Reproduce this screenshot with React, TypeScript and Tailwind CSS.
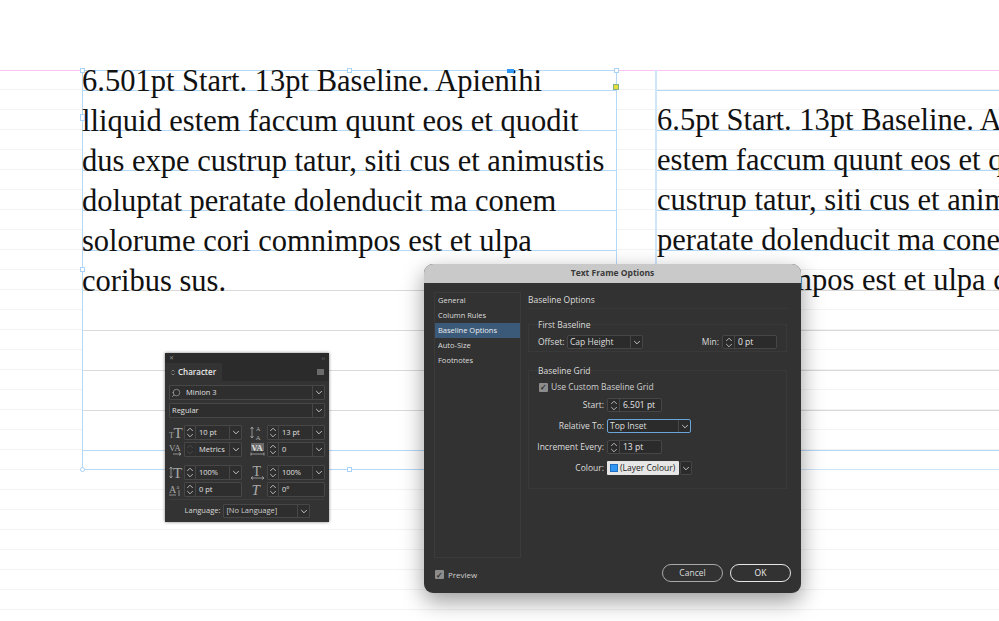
import type { ReactNode } from 'react';
import { Search } from 'lucide-react';

const leftLines = [
  '6.501pt Start. 13pt Baseline. Apienihi',
  'lliquid estem faccum quunt eos et quodit',
  'dus expe custrup tatur, siti cus et animustis',
  'doluptat peratate dolenducit ma conem',
  'solorume cori comnimpos est et ulpa',
  'coribus sus.',
];

const rightLines = [
  '6.5pt Start. 13pt Baseline. Apienihi lliquid',
  'estem faccum quunt eos et quodit dus',
  'custrup tatur, siti cus et animustis doluptat',
  'peratate dolenducit ma conem solorume',
  'cori comnimpos est et ulpa coribus sus.',
];

const pageRows = Array.from({ length: 28 });
const gridRows = Array.from({ length: 10 });

const Chev = ({ up = false, color = 'stroke-[#c4c4c4]' }: { up?: boolean; color?: string }) => (
  <svg width="8" height="5" viewBox="0 0 8 5" fill="none" className={color}>
    <path d={up ? 'M1.2 4 L4 1.2 L6.8 4' : 'M1.2 1 L4 3.8 L6.8 1'} strokeWidth="1" />
  </svg>
);

const Stepper = ({ disabled = false, width = 'w-[11px]' }: { disabled?: boolean; width?: string }) => (
  <span className={`flex h-full shrink-0 flex-col items-center justify-center gap-[1px] border-r border-[#474747] ${width} ${disabled ? 'opacity-20' : ''}`}>
    <Chev up color="stroke-[#b5b5b5]" />
    <Chev color="stroke-[#b5b5b5]" />
  </span>
);

const PanelField = ({ value, dropdown = true, disabled = false }: { value: string; dropdown?: boolean; disabled?: boolean }) => (
  <div className="flex h-[15px] w-[58px] items-center rounded-[1px] border border-[#474747] bg-[#2e2e2e]">
    <Stepper disabled={disabled} />
    <span className="flex-1 pl-[3px] text-[7.5px] text-[#e0e0e0]">{value}</span>
    {dropdown && (
      <span className="flex h-full w-[12px] items-center justify-center border-l border-[#474747]">
        <Chev />
      </span>
    )}
  </div>
);

const PanelSelect = ({ value, icon = false }: { value: string; icon?: boolean }) => (
  <div className="flex h-[15px] items-center rounded-[1px] border border-[#474747] bg-[#2e2e2e]">
    {icon && <Search className="ml-[1px] h-[10px] w-[10px] -scale-x-100 text-[#b5b5b5]" strokeWidth={1.5} />}
    <span className={`flex-1 text-[7.5px] text-[#e0e0e0] ${icon ? 'pl-[5px]' : 'pl-[2px]'}`}>{value}</span>
    <span className="flex h-full w-[12px] items-center justify-center border-l border-[#474747]">
      <Chev />
    </span>
  </div>
);

// character panel icons, letters stay real svg text
const PanelIcon = ({ children }: { children: ReactNode }) => (
  <svg width="15" height="15" viewBox="0 0 15 15" className="shrink-0 fill-[#a9a9a9] stroke-[#a9a9a9] font-['Liberation_Serif',serif]">
    {children}
  </svg>
);

const SizeIcon = () => (
  <PanelIcon>
    <text x="0" y="13" fontSize="8" stroke="none">T</text>
    <text x="4.5" y="12.5" fontSize="15" stroke="none">T</text>
  </PanelIcon>
);

const LeadingIcon = () => (
  <PanelIcon>
    <text x="6" y="6" fontSize="6" stroke="none">A</text>
    <text x="5.5" y="14.5" fontSize="7" stroke="none">A</text>
    <path d="M2 2 V13 M0.5 4 L2 2 L3.5 4 M0.5 11 L2 13 L3.5 11" fill="none" strokeWidth="0.8" />
  </PanelIcon>
);

const KernIcon = () => (
  <PanelIcon>
    <text x="0" y="9" fontSize="9" stroke="none">VA</text>
    <path d="M4 12 H12 M10 10.5 L12 12 L10 13.5" fill="none" strokeWidth="0.8" />
  </PanelIcon>
);

const TrackIcon = () => (
  <PanelIcon>
    <rect x="1" y="1" width="13" height="8" stroke="none" fill="#6a6a6a" />
    <text x="1.5" y="8.5" fontSize="8.5" fontWeight="bold" stroke="none" fill="#e0e0e0">VA</text>
    <path d="M1 12 H14 M1 10.5 V13.5 M14 10.5 V13.5" fill="none" strokeWidth="0.8" />
  </PanelIcon>
);

const VScaleIcon = () => (
  <PanelIcon>
    <text x="4" y="13" fontSize="15" stroke="none">T</text>
    <path d="M2 2 V13 M0.5 4 L2 2 L3.5 4 M0.5 11 L2 13 L3.5 11" fill="none" strokeWidth="0.8" />
  </PanelIcon>
);

const HScaleIcon = () => (
  <PanelIcon>
    <text x="2.5" y="10.5" fontSize="14" stroke="none">T</text>
    <path d="M1 13 H14 M3 11.5 L1 13 L3 14.5 M12 11.5 L14 13 L12 14.5" fill="none" strokeWidth="0.8" />
  </PanelIcon>
);

const BaselineIcon = () => (
  <PanelIcon>
    <text x="0" y="11" fontSize="10" stroke="none">A</text>
    <text x="7.5" y="7" fontSize="6" stroke="none">a</text>
    <path d="M0 13 H7 M10 8 V14" fill="none" strokeWidth="0.8" />
  </PanelIcon>
);

const SkewIcon = () => (
  <PanelIcon>
    <text x="1.5" y="12.5" fontSize="15" fontStyle="italic" stroke="none">T</text>
  </PanelIcon>
);

const IconRow = ({ icon, children }: { icon: ReactNode; children: ReactNode }) => (
  <div className="flex items-center justify-between">
    {icon}
    {children}
  </div>
);

const CharacterPanel = () => (
  <div className="absolute left-[165px] top-[353px] flex h-[169px] w-[164px] flex-col bg-[#333333] shadow-[0_0_3px_rgba(0,0,0,0.5)]">
    <div className="flex h-[10px] items-center justify-between bg-[#2b2b2b] px-[4px] text-[6px] leading-none text-[#8a8a8a]">
      <span>✕</span>
      <span>‹‹</span>
    </div>
    <div className="flex h-[18px] items-stretch justify-between bg-[#2b2b2b]">
      <div className="flex w-[57px] items-center gap-[3px] bg-[#333333] pl-[6px] text-[8px] font-semibold text-[#e8e8e8]">
        <span className="flex flex-col">
          <svg width="4" height="7" viewBox="0 0 4 7" fill="none" className="stroke-[#a0a0a0]">
            <path d="M0.5 2.5 L2 1 L3.5 2.5 M0.5 4.5 L2 6 L3.5 4.5" strokeWidth="0.7" />
          </svg>
        </span>
        <span>Character</span>
      </div>
      <div className="mr-[5px] mt-[6px] h-[6px] w-[7px] bg-[#6a6a6a]" />
    </div>
    <div className="flex flex-1 flex-col px-[4px] pt-[4px]">
      <div className="flex flex-col gap-[3px]">
        <PanelSelect value="Minion 3" icon />
        <PanelSelect value="Regular" />
      </div>
      <div className="mt-[7px] grid grid-cols-[73px_75px] gap-x-[8px] gap-y-[2px]">
        <IconRow icon={<SizeIcon />}><PanelField value="10 pt" /></IconRow>
        <IconRow icon={<LeadingIcon />}><PanelField value="13 pt" /></IconRow>
        <IconRow icon={<KernIcon />}><PanelField value="Metrics" disabled /></IconRow>
        <IconRow icon={<TrackIcon />}><PanelField value="0" /></IconRow>
      </div>
      <div className="mt-[8px] grid grid-cols-[73px_75px] gap-x-[8px] gap-y-[2px]">
        <IconRow icon={<VScaleIcon />}><PanelField value="100%" /></IconRow>
        <IconRow icon={<HScaleIcon />}><PanelField value="100%" /></IconRow>
        <IconRow icon={<BaselineIcon />}><PanelField value="0 pt" dropdown={false} /></IconRow>
        <IconRow icon={<SkewIcon />}><PanelField value="0°" dropdown={false} /></IconRow>
      </div>
      <div className="mt-[2px] flex items-center justify-center gap-[3px] border-t border-[#3d3d3d] pl-[1px] pt-[4px]">
        <span className="text-[7.5px] text-[#d8d8d8]">Language:</span>
        <div className="flex h-[14px] w-[87px] items-center rounded-[1px] border border-[#474747] bg-[#2e2e2e]">
          <span className="flex-1 pl-[2px] text-[7.5px] text-[#cfcfcf]">[No Language]</span>
          <span className="flex h-full w-[12px] items-center justify-center border-l border-[#474747]">
            <Chev />
          </span>
        </div>
      </div>
    </div>
  </div>
);

const Check = () => (
  <span className="flex h-[9px] w-[9px] items-center justify-center rounded-[1px] bg-[#8c8c8c] text-[8px] font-bold leading-none text-[#2d2d2d]">✓</span>
);

const DialogSpin = ({ value, width }: { value: string; width: string }) => (
  <div className={`flex h-[14px] items-center rounded-[2px] border border-[#464646] bg-[#2b2b2b] ${width}`}>
    <Stepper width="w-[12px]" />
    <span className="pl-[3px] text-[8.5px] text-[#e6e6e6]">{value}</span>
  </div>
);

const DialogSelect = ({ value, width, focus = false }: { value: string; width: string; focus?: boolean }) => (
  <div className={`flex h-[14px] items-center rounded-[2px] border bg-[#2b2b2b] ${width} ${focus ? 'border-[#6aa5d8]' : 'border-[#464646]'}`}>
    <span className="flex-1 pl-[2px] text-[8.5px] text-[#dedede]">{value}</span>
    <span className="flex h-full w-[12px] items-center justify-center border-l border-[#464646]">
      <Chev />
    </span>
  </div>
);

const GridRow = ({ label, children }: { label: string; children: ReactNode }) => (
  <div className="flex h-[14px] items-center gap-[3px]">
    <span className="w-[70px] whitespace-nowrap text-right text-[8.5px] text-[#dcdcdc]">{label}</span>
    {children}
  </div>
);

const TextFrameDialog = () => (
  <div className="absolute left-[424px] top-[264px] flex h-[329px] w-[377px] flex-col overflow-hidden rounded-[9px] bg-[#323232] shadow-[0_8px_22px_rgba(0,0,0,0.4)]">
    <div className="flex h-[19px] shrink-0 items-center justify-center bg-[#c9c9c9] text-[8.5px] font-bold text-[#3a3a3a]">
      Text Frame Options
    </div>
    <div className="flex flex-1 gap-[7px] pl-[10px] pr-[14px] pt-[9px]">
      <div className="flex h-[266px] w-[87px] shrink-0 flex-col border border-[#3b3b3b] text-[7.5px] font-medium text-[#dcdcdc]">
        <div className="flex h-[15px] shrink-0 items-center pl-[3px]">General</div>
        <div className="flex h-[15px] shrink-0 items-center pl-[3px]">Column Rules</div>
        <div className="flex h-[15px] shrink-0 items-center bg-[#3b5a7a] pl-[3px] text-[#eeeeee]">Baseline Options</div>
        <div className="flex h-[15px] shrink-0 items-center pl-[3px]">Auto-Size</div>
        <div className="flex h-[15px] shrink-0 items-center pl-[3px]">Footnotes</div>
      </div>
      <div className="mt-[1px] flex flex-1 flex-col">
        <div className="flex h-[16px] items-center border-b border-[#393939] text-[8.5px] font-medium text-[#dddddd]">Baseline Options</div>
        <div className="mt-[15px] flex h-[28px] flex-col border border-[#393939] px-[9px]">
          <span className="-mt-[7px] text-[8.5px] font-medium leading-[14px] text-[#dcdcdc]">First Baseline</span>
          <div className="mt-[3px] flex items-center">
            <span className="w-[29px] text-[8.5px] text-[#dcdcdc]">Offset:</span>
            <DialogSelect value="Cap Height" width="w-[76px]" />
            <span className="ml-auto mr-[3px] text-[8.5px] text-[#dcdcdc]">Min:</span>
            <DialogSpin value="0 pt" width="w-[55px]" />
          </div>
        </div>
        <div className="mt-[18px] flex h-[119px] flex-col border border-[#393939] pl-[5px]">
          <span className="-mt-[7px] pl-[4px] text-[8.5px] font-medium leading-[14px] text-[#dcdcdc]">Baseline Grid</span>
          <div className="mt-[2px] flex h-[14px] items-center gap-[3px] pl-[5px] text-[8.5px] text-[#d0d0d0]">
            <Check />
            <span>Use Custom Baseline Grid</span>
          </div>
          <div className="mt-[4px] flex flex-col gap-[7px]">
            <GridRow label="Start:"><DialogSpin value="6.501 pt" width="w-[55px]" /></GridRow>
            <GridRow label="Relative To:"><DialogSelect value="Top Inset" width="w-[84px]" focus /></GridRow>
            <GridRow label="Increment Every:"><DialogSpin value="13 pt" width="w-[55px]" /></GridRow>
            <GridRow label="Colour:">
              <div className="flex h-[14px] w-[85px] items-stretch gap-[1px]">
                <span className="flex w-[72px] items-center gap-[2px] rounded-[1px] bg-[#e6e6e6] pl-[3px] text-[8.5px] text-[#222222]">
                  <span className="h-[8px] w-[8px] shrink-0 border border-[#1e6fc4] bg-[#2f96f3]" />
                  <span className="whitespace-nowrap">(Layer Colour)</span>
                </span>
                <span className="flex flex-1 items-center justify-center rounded-[2px] border border-[#464646] bg-[#2b2b2b]">
                  <Chev />
                </span>
              </div>
            </GridRow>
          </div>
        </div>
      </div>
    </div>
    <div className="flex items-center justify-between pb-[11px] pl-[11px] pr-[10px]">
      <div className="mt-[3px] flex items-center gap-[4px] text-[8px] text-[#cfcfcf]">
        <Check />
        <span>Preview</span>
      </div>
      <div className="flex gap-[7px]">
        <div className="flex h-[18px] w-[61px] items-center justify-center rounded-full border border-[#a8a8a8] text-[8.5px] text-[#dcdcdc]">Cancel</div>
        <div className="flex h-[18px] w-[61px] items-center justify-center rounded-full border-[1.5px] border-[#e6e6e6] text-[8.5px] text-[#eeeeee]">OK</div>
      </div>
    </div>
  </div>
);

const Handle = ({ className }: { className: string }) => (
  <span className={`absolute h-[5px] w-[5px] border border-[#a9d3f7] bg-white ${className}`} />
);

export default function App() {
  return (
    <div className="relative h-[621px] w-[999px] overflow-hidden bg-white font-['Open_Sans',sans-serif]">
      {/* page baseline grid */}
      <div className="absolute inset-x-0 top-[70px] flex flex-col">
        {pageRows.map((_, i) => (
          <div key={i} className="h-[20px] border-b border-[#f3f3f3]" />
        ))}
      </div>
      {/* page margin */}
      <div className="absolute inset-x-0 top-[70px] h-px bg-[#f9c4f0]" />

      {/* left text frame */}
      <div className="absolute left-[82px] top-[70px] h-[400px] w-[535px] border border-[#b5d8f7] bg-white">
        <div className="absolute inset-x-0 top-[19px] flex flex-col">
          {gridRows.map((_, i) => (
            <div key={i} className={`h-[40px] border-t ${i >= 5 && i <= 8 ? 'border-[#d9d9d9]' : 'border-[#b5d8f7]'}`} />
          ))}
        </div>
        <div className="relative -ml-[1px] -mt-[10px] whitespace-nowrap font-['Liberation_Serif',serif] text-[30.5px] leading-[40px] text-[#111111]">
          {leftLines.map((line) => (
            <div key={line}>{line}</div>
          ))}
        </div>
        <Handle className="-left-[3px] -top-[3px]" />
        <Handle className="left-[264px] -top-[3px]" />
        <Handle className="-right-[3px] -top-[3px]" />
        <Handle className="-left-[3px] top-[43px] h-[7px]" />
        <Handle className="-left-[3px] top-[196px]" />
        <Handle className="-right-[3px] top-[196px]" />
        <Handle className="-left-[3px] -bottom-[3px] rounded-full" />
        <Handle className="left-[264px] -bottom-[3px]" />
        <span className="absolute left-[424px] -top-[2px] h-[4px] w-[7px] bg-[#2f96f3]" />
        <span className="absolute -right-[3px] top-[13px] h-[6px] w-[6px] border border-[#7fb37f] bg-[#e8dc3c]" />
      </div>

      {/* right text frame */}
      <div className="absolute left-[655px] top-[70px] h-[400px] w-[360px] border-b border-l-2 border-[#cfe5fa]">
        <div className="absolute inset-x-0 top-[20px] flex flex-col">
          {gridRows.map((_, i) => (
            <div key={i} className={`h-[40px] border-t ${i >= 5 && i <= 8 ? 'border-[#d9d9d9]' : 'border-[#b5d8f7]'}`} />
          ))}
        </div>
        <div className="relative whitespace-nowrap pt-[30px] font-['Liberation_Serif',serif] text-[30.5px] leading-[40px] text-[#111111]">
          {rightLines.map((line) => (
            <div key={line}>{line}</div>
          ))}
        </div>
      </div>

      <CharacterPanel />
      <TextFrameDialog />
    </div>
  );
}
